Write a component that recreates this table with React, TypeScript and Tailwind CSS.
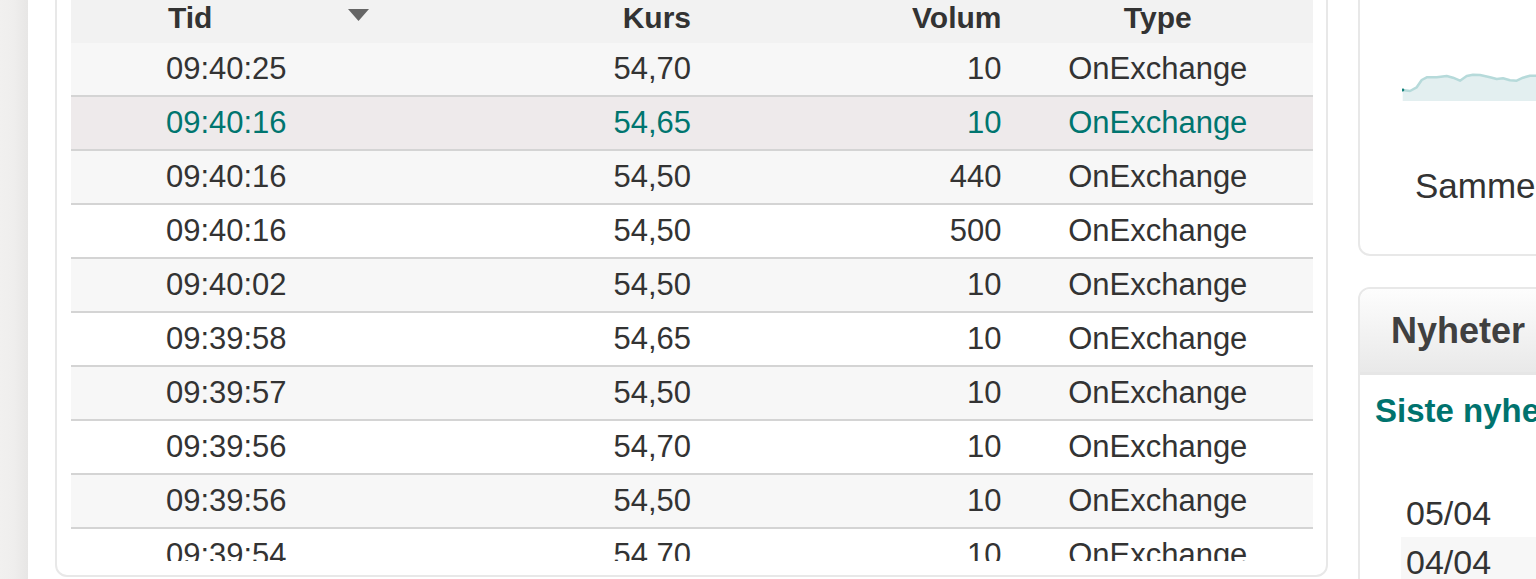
import React from "react";

type Trade = { time: string; price: string; volume: string; type: string };

const trades: Trade[] = [
  { time: "09:40:25", price: "54,70", volume: "10", type: "OnExchange" },
  { time: "09:40:16", price: "54,65", volume: "10", type: "OnExchange" },
  { time: "09:40:16", price: "54,50", volume: "440", type: "OnExchange" },
  { time: "09:40:16", price: "54,50", volume: "500", type: "OnExchange" },
  { time: "09:40:02", price: "54,50", volume: "10", type: "OnExchange" },
  { time: "09:39:58", price: "54,65", volume: "10", type: "OnExchange" },
  { time: "09:39:57", price: "54,50", volume: "10", type: "OnExchange" },
  { time: "09:39:56", price: "54,70", volume: "10", type: "OnExchange" },
  { time: "09:39:56", price: "54,50", volume: "10", type: "OnExchange" },
  { time: "09:39:54", price: "54,70", volume: "10", type: "OnExchange" },
];

const HIGHLIGHT = 1;

const Sparkline: React.FC = () => {
  const pts =
    "0.7,19 8,20 14.7,16.3 19.7,9 24.7,6.3 34.7,6.3 44.7,5 51,6.7 58,9.7 64.7,5 71,3.7 78,4 88,6.3 94.7,8 101,7.3 108,9.3 114.7,9.7 121,6.7 128,4.7 134,4.7 160,5";
  return (
    <svg width="160" height="30" viewBox="0 0 160 30" className="block">
      <polygon points={`0.7,30 ${pts} 160,30`} fill="#e3eff0" />
      <polyline points={pts} fill="none" stroke="#b6dada" strokeWidth="2.5" strokeLinejoin="round" />
      <circle cx="0.9" cy="19" r="1.4" fill="#138079" />
    </svg>
  );
};

const TradesTable: React.FC = () => {
  return (
    <div className="w-[1242px]">
      {/* Header */}
      <div className="grid grid-cols-4 h-[43px] bg-[#f2f2f2] text-[30px] leading-[34px] font-bold text-[#333]">
        <div className="flex items-start justify-between pl-[97px] pr-[13px] pt-[1px]">
          <span>Tid</span>
          <svg width="21" height="12" viewBox="0 0 21 12" className="mt-[8px]">
            <polygon points="0,0 21,0 10.5,12" fill="#666" />
          </svg>
        </div>
        <div className="text-right pr-[1px] pt-[1px]">Kurs</div>
        <div className="text-right pr-[1px] pt-[1px]">Volum</div>
        <div className="text-center pt-[1px]">Type</div>
      </div>

      {/* Rows */}
      {trades.map((t, i) => {
        const hl = i === HIGHLIGHT;
        const bg = hl ? "bg-[#eeeaeb]" : i % 2 === 0 ? "bg-[#f7f7f7]" : "bg-white";
        return (
          <div
            key={i}
            className={`grid grid-cols-4 h-[54px] border-b-2 border-[#d4d4d4] text-[31px] leading-[52px] ${bg} ${
              hl ? "text-[#00756f]" : "text-[#333]"
            }`}
          >
            <div className="text-center">{t.time}</div>
            <div className="text-right pr-[1px]">{t.price}</div>
            <div className="text-right pr-[1px]">{t.volume}</div>
            <div className="text-center">{t.type}</div>
          </div>
        );
      })}
    </div>
  );
};

const App: React.FC = () => {
  return (
    <div className="w-[1536px] h-[579px] overflow-hidden bg-white flex items-start font-['Liberation_Sans',Arial,sans-serif] text-[#333]">
      {/* Left edge strip */}
      <div className="w-[28px] h-full shrink-0 bg-linear-to-r from-[#f1f0ef] via-[#efeeed] to-[#e7e6e5]" />

      {/* Trades card */}
      <div className="ml-[27px] -mt-[40px] shrink-0 w-[1273px] h-[617px] border-2 border-[#e8e8e8] rounded-[12px] pt-[38px] pl-[14px] pr-[13px] pb-[14px]">
        <div className="h-[561px] overflow-hidden">
          <TradesTable />
        </div>
      </div>

      {/* Right column */}
      <div className="ml-[30px] shrink-0 w-[400px] flex flex-col">
        {/* Chart card */}
        <div className="-mt-[40px] h-[296px] border-2 border-[#e8e8e8] rounded-[12px] pt-[109px] pl-[42px]">
          <Sparkline />
          <div className="mt-[65px] ml-[13px] text-[35px] leading-[40px] whitespace-nowrap text-[#333]">
            Sammenlign
          </div>
        </div>

        {/* News card */}
        <div className="mt-[31px] h-[400px] border-2 border-[#e8e8e8] rounded-[12px]">
          <div className="h-[86px] rounded-t-[10px] bg-linear-to-b from-[#fdfdfd] to-[#e9e9e9] border-b-[3px] border-[#e6e6e6] pt-[21px] pl-[31px]">
            <span className="text-[36px] leading-[42px] font-bold text-[#404040]">Nyheter</span>
          </div>
          <div className="pl-[15px] mt-[17px] text-[33px] leading-[38px] font-bold text-[#00736e] whitespace-nowrap">
            Siste nyheter
          </div>
          <div className="mt-[58px] ml-[41px]">
            <div className="h-[49px] pt-[6px] pl-[5px] text-[34px] leading-[39px] text-[#333]">05/04</div>
            <div className="h-[49px] pt-[6px] pl-[5px] text-[34px] leading-[39px] text-[#333] bg-[#f7f7f7]">04/04</div>
          </div>
        </div>
      </div>
    </div>
  );
};

export default App;
